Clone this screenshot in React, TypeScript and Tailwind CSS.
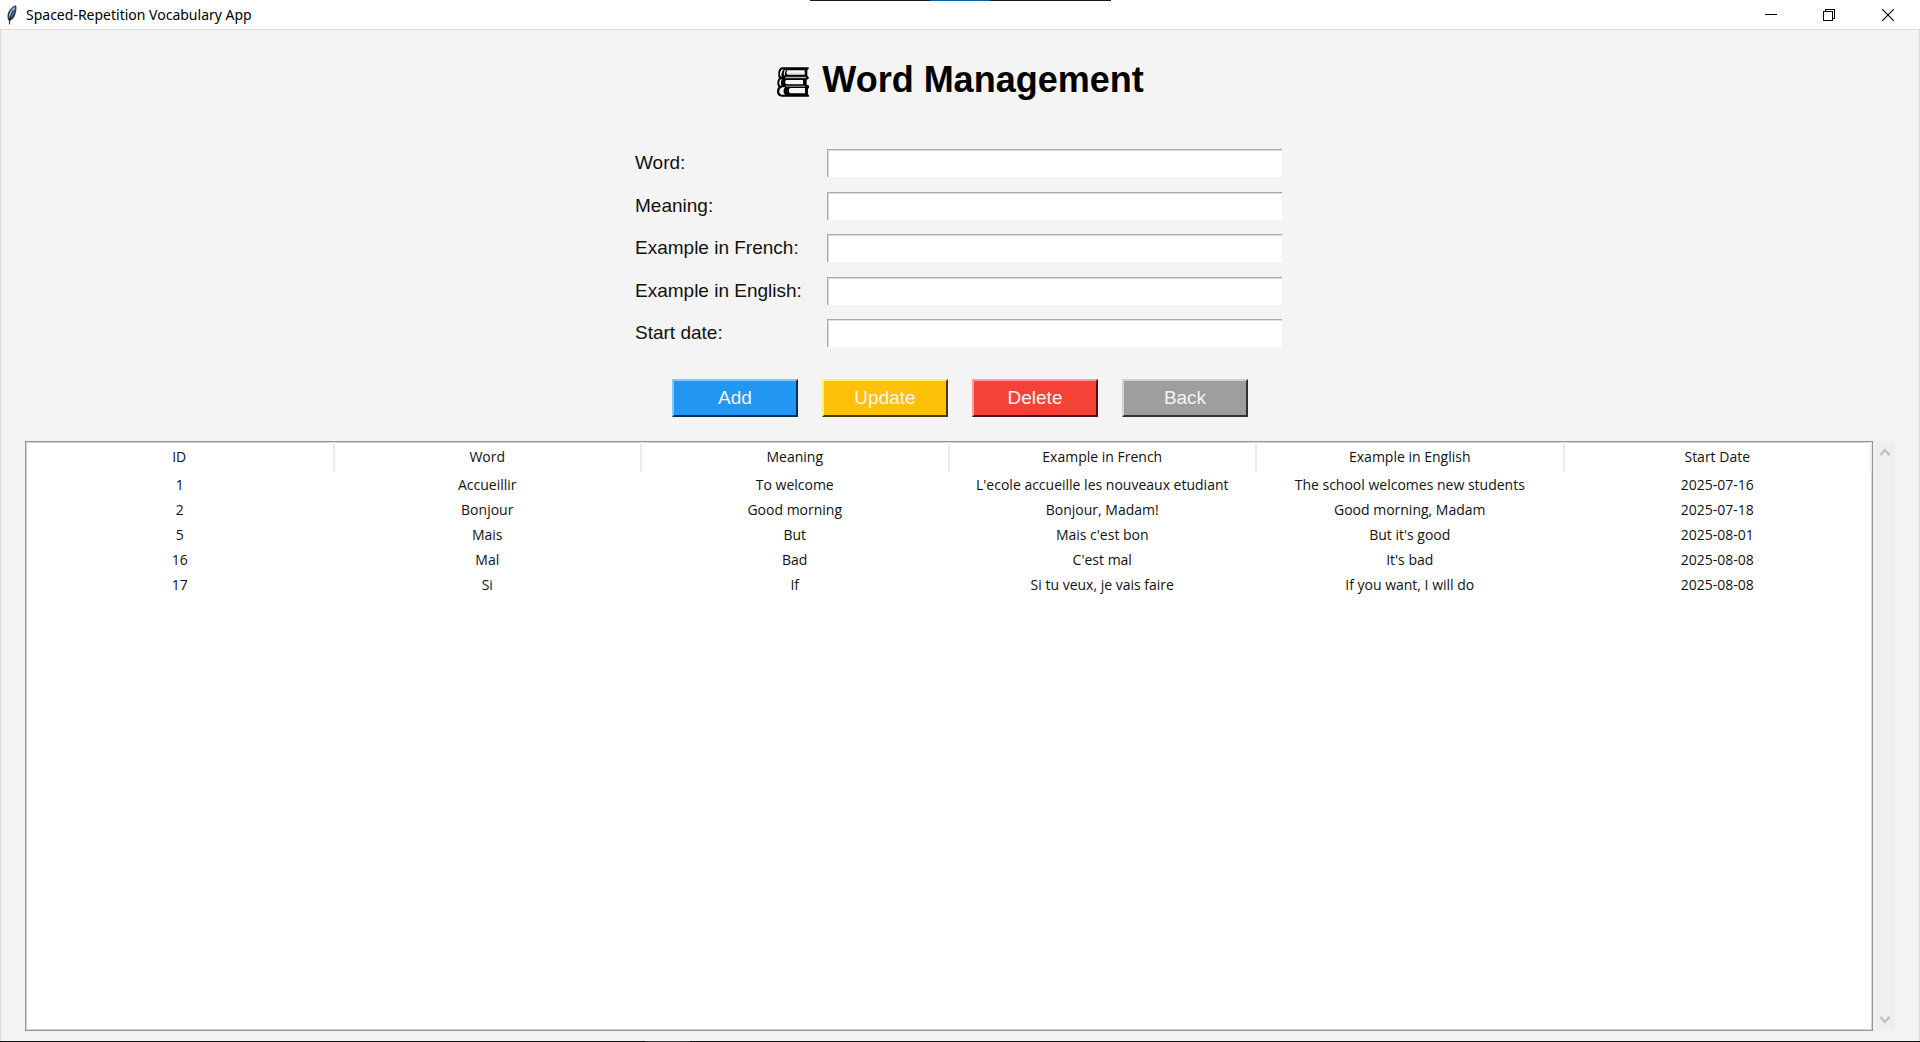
import React from 'react';

const fields = ['Word:', 'Meaning:', 'Example in French:', 'Example in English:', 'Start date:'];

const actions = [
  { label: 'Add', tone: 'bg-[#2196f3] border-t-[#7fcbff] border-l-[#7fcbff] border-r-[#0b2f4d] border-b-[#0b2f4d]' },
  { label: 'Update', tone: 'bg-[#ffc107] border-t-[#fff36b] border-l-[#fff36b] border-r-[#4d3a05] border-b-[#4d3a05]' },
  { label: 'Delete', tone: 'bg-[#f44336] border-t-[#ff9c95] border-l-[#ff9c95] border-r-[#4b1714] border-b-[#4b1714]' },
  { label: 'Back', tone: 'bg-[#9e9e9e] border-t-[#d2d2d2] border-l-[#d2d2d2] border-r-[#323232] border-b-[#323232]' },
];

const columns = ['ID', 'Word', 'Meaning', 'Example in French', 'Example in English', 'Start Date'];

const rows = [
  ['1', 'Accueillir', 'To welcome', "L'ecole accueille les nouveaux etudiant", 'The school welcomes new students', '2025-07-16'],
  ['2', 'Bonjour', 'Good morning', 'Bonjour, Madam!', 'Good morning, Madam', '2025-07-18'],
  ['5', 'Mais', 'But', "Mais c'est bon", "But it's good", '2025-08-01'],
  ['16', 'Mal', 'Bad', "C'est mal", "It's bad", '2025-08-08'],
  ['17', 'Si', 'If', 'Si tu veux, je vais faire', 'If you want, I will do', '2025-08-08'],
];

function FeatherIcon() {
  return (
    <svg className="ml-1.5" width="12" height="20" viewBox="0 0 36 60" aria-hidden="true">
      <path d="M30 1C20 3 8 15 5 29c-1 7 0 12 2 17l3 2c7-2 14-8 17-17C31 20 33 8 30 1Z" fill="#2b3440" />
      <path d="M28 5C20 9 12 19 9 30c-1 5-1 9 0 12 6-3 11-8 14-15 3-8 5-15 5-22Z" fill="#4d80bd" />
      <path d="M26 8C19 13 13 23 11 33" fill="none" stroke="#a9c8e8" strokeWidth="4" />
      <path d="M22 16C15 28 11 40 10 58" fill="none" stroke="#1c1c1c" strokeWidth="3" />
    </svg>
  );
}

function BooksIcon() {
  return (
    <svg width="34" height="32" viewBox="9 11 102 96" aria-hidden="true">
      <path d="M30 15h77v5l-4 3v18l4 3v5l-6 3v15l7 3v6l-3 3v17l3 3v4H28C16 103 12 96 12 87c0-6 2-10 5-13-3-3-4-8-4-12 0-6 2-11 5-14-2-4-2-8-2-14 0-11 4-19 14-19Z" fill="#000" />
      <g fill="#f7f7f7">
        <path d="M44 24h51v13H44c-5-3-5-10 0-13Z" />
        <path d="M29 21c-6 3-8 8-8 14 0 5 2 8 5 9-2-7 0-17 6-23Z" />
        <path d="M36 22c-4 6-5 12-2 18l2-2c-1-5 0-10 3-15Z" />
        <path d="M40 53h50v13H40c-5-3-5-10 0-13Z" />
        <path d="M24 51c-6 4-8 15-1 19h3c-4-6-3-13 1-19Z" />
        <path d="M52 77h44v16H52c-6-3-6-13 0-16Z" />
        <path d="M29 75c-11 3-14 17-4 22h11c-6-6-6-16 1-22Z" />
      </g>
      <path d="M38 43h62v5H36ZM36 70h60v3H40Z" fill="#a9a9a9" />
      <path d="M50 31h45v3H48Z" fill="#d9d9d9" />
    </svg>
  );
}

function TitleBar() {
  return (
    <header className="flex h-[30px] shrink-0 items-center border-b border-[#d7dad9] bg-white">
      <div className="flex flex-1 items-center gap-2">
        <FeatherIcon />
        <span className="font-['Noto_Sans',sans-serif] text-sm leading-5 text-black">Spaced-Repetition Vocabulary App</span>
      </div>
      <div className="flex h-[1px] w-[301px] self-start bg-[#1b1b1b]">
        <span className="ml-[120px] h-[1px] w-[60px] bg-[#0063b1]" />
      </div>
      <div className="flex flex-1 justify-end">
        <button type="button" aria-label="Minimize" className="flex h-7 w-[58px] items-center justify-center">
          <svg width="12" height="12" viewBox="0 0 12 12" shapeRendering="crispEdges"><path d="M0 5h12v1H0z" /></svg>
        </button>
        <button type="button" aria-label="Restore" className="flex h-7 w-[58px] items-center justify-center">
          <svg width="12" height="12" viewBox="0 0 12 12" fill="none" stroke="#000" shapeRendering="crispEdges">
            <path d="M.5 2.5h9v9h-9zM2.5 2.5v-2h9v9h-2" />
          </svg>
        </button>
        <button type="button" aria-label="Close" className="mr-[2px] flex h-7 w-[60px] items-center justify-center">
          <svg width="12" height="12" viewBox="0 0 12 12" fill="none" stroke="#000" strokeWidth="1.1"><path d="m0 0 12 12M12 0 0 12" /></svg>
        </button>
      </div>
    </header>
  );
}

function WordForm() {
  return (
    <form className="flex flex-col items-center font-['Liberation_Sans',Arial,sans-serif] text-[19px]">
      <div className="grid h-[198px] content-between pr-[3px]">
        {fields.map((label, i) => (
          <div key={label} className="flex items-center">
            <label htmlFor={`field-${i}`} className="w-48 leading-7 text-[#111]">{label}</label>
            <input
              id={`field-${i}`}
              type="text"
              className="h-7 w-[455px] border-t border-l border-[#a8a8a8] bg-white px-1 text-base shadow-[inset_1px_1px_0_#dcdcdc] outline-none"
            />
          </div>
        ))}
      </div>
      <div className="mt-8 flex gap-6">
        {actions.map(({ label, tone }) => (
          <button key={label} type="button" className={`h-[38px] w-[126px] border-2 leading-6 text-[#f4f4f4] ${tone}`}>
            {label}
          </button>
        ))}
      </div>
    </form>
  );
}

function WordTable() {
  return (
    <section className="flex flex-1 gap-[2px] pr-6 pl-6">
      <div className="flex-1 border border-[#8f959d] bg-white shadow-[inset_0_0_0_1px_#d3d6d9]">
        <table className="w-full table-fixed border-collapse text-center font-['Open_Sans',sans-serif] text-sm text-[#111]">
          <thead>
            <tr className="h-[30px]">
              {columns.map((name) => (
                <th key={name} scope="col" className="border-r-2 border-[#ececec] p-0 leading-5 font-normal">{name}</th>
              ))}
            </tr>
          </thead>
          <tbody>
            {rows.map((row) => (
              <tr key={row[0]} className="h-[25px]">
                {row.map((cell, i) => (
                  <td key={i} className="p-0 leading-5 whitespace-nowrap">{cell}</td>
                ))}
              </tr>
            ))}
          </tbody>
        </table>
      </div>
      <div className="flex w-5 flex-col items-center justify-between bg-[#efefef] py-1.5">
        <button type="button" aria-label="Scroll up">
          <svg width="10" height="10" viewBox="0 0 10 10" fill="none" stroke="#bfbfbf" strokeWidth="2.5"><path d="M.5 8 5 3l4.500 5" /></svg>
        </button>
        <button type="button" aria-label="Scroll down">
          <svg width="10" height="10" viewBox="0 0 10 10" fill="none" stroke="#bfbfbf" strokeWidth="2.5"><path d="M.5 2 5 7l4.500-5" /></svg>
        </button>
      </div>
    </section>
  );
}

export default function App() {
  return (
    <div className="flex min-h-screen flex-col bg-[#f4f4f4]">
      <TitleBar />
      <main className="flex flex-1 flex-col border-x border-[#d7dad9] pb-2.5">
        <h1 className="mt-7 mb-[47px] flex items-center justify-center gap-3 font-['Liberation_Sans',Arial,sans-serif] text-4xl leading-11 font-bold text-black">
          <span className="mt-1"><BooksIcon /></span>
          Word Management
        </h1>
        <WordForm />
        <div className="h-6" />
        <WordTable />
      </main>
      <footer className="h-[1px] bg-[#111]">
        <div className="ml-[645px] h-[1px] w-[45px] bg-[#3a3a3a]" />
      </footer>
    </div>
  );
}
